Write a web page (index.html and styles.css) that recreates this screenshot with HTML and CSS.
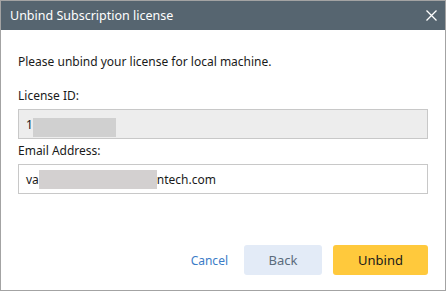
FILE: index.html
```html
<!DOCTYPE html>
<html lang="en">
<head>
  <meta charset="UTF-8">
  <meta name="viewport" content="width=device-width, initial-scale=1.0">
  <title>Unbind Subscription license</title>
  <link rel="stylesheet" href="styles.css">
</head>
<body>
  <div class="dialog">
    <div class="titlebar">
      <span class="title">Unbind Subscription license</span>
      <button class="close" aria-label="Close">
        <svg width="11" height="11" viewBox="0 0 11 11">
          <path d="M0.5 0.5 L10.5 10.5 M10.5 0.5 L0.5 10.5" stroke="#ffffff" stroke-width="1.3" fill="none"/>
        </svg>
      </button>
    </div>

    <div class="content">
      <p class="intro">Please unbind your license for local machine.</p>

      <label class="label">License ID:</label>
      <div class="field readonly">
        <span>1</span><span class="masked masked-id"></span>
      </div>

      <label class="label">Email Address:</label>
      <div class="field">
        <span>va</span><span class="masked masked-mail"></span><span>ntech.com</span>
      </div>
    </div>

    <div class="actions">
      <a href="#" class="cancel">Cancel</a>
      <button class="btn back">Back</button>
      <button class="btn unbind">Unbind</button>
    </div>
  </div>
</body>
</html>
```

FILE: styles.css
```css
body {
  margin: 0;
  background-color: #ffffff;
  font-family: "Noto Sans", "Open Sans", sans-serif;
  color: #1a1a1a;
}
.dialog {
  width: 446px;
  height: 291px;
  box-sizing: border-box;
  border: 1px solid #a3a3a3;
  display: flex;
  flex-direction: column;
  background-color: #ffffff;
}
.titlebar {
  height: 29px;
  background-color: #566570;
  display: flex;
  align-items: center;
  justify-content: space-between;
  padding: 0 8px 0 9px;
}
.title {
  color: #ffffff;
  font-size: 12.5px;
}
.close {
  background: none;
  border: none;
  padding: 0;
  width: 11px;
  height: 11px;
  display: flex;
  cursor: pointer;
}
.content {
  padding: 24px 17px 0 17px;
  display: flex;
  flex-direction: column;
}
.intro {
  margin: 0 0 18px 0;
  font-size: 12px;
  line-height: 16px;
}
.label {
  font-size: 12px;
  line-height: 16px;
  margin-bottom: 5px;
}
.field {
  height: 30px;
  box-sizing: border-box;
  border: 1px solid #c8c8c8;
  display: flex;
  align-items: center;
  padding: 0 7px;
  font-size: 12px;
  margin-bottom: 4px;
}
.field.readonly {
  background-color: #ededed;
}
.masked {
  display: inline-block;
  height: 19px;
  background-color: #d3d0d0;
}
.masked-id {
  width: 83px;
  margin-top: 7px;
  background-color: #d0d0d0;
}
.masked-mail {
  width: 118px;
}
.actions {
  margin-top: auto;
  display: flex;
  align-items: center;
  justify-content: flex-end;
  padding: 0 17px 15px 0;
}
.cancel {
  color: #3a7cc7;
  text-decoration: none;
  font-size: 12px;
  margin-right: 16px;
}
.btn {
  height: 30px;
  border: none;
  border-radius: 3px;
  font-family: "Noto Sans", "Open Sans", sans-serif;
  font-size: 13px;
  cursor: pointer;
}
.back {
  width: 78px;
  background-color: #e3ebf7;
  color: #5b6b7c;
  margin-right: 11px;
}
.unbind {
  width: 95px;
  background-color: #ffc93c;
  color: #1a1a1a;
}
```
